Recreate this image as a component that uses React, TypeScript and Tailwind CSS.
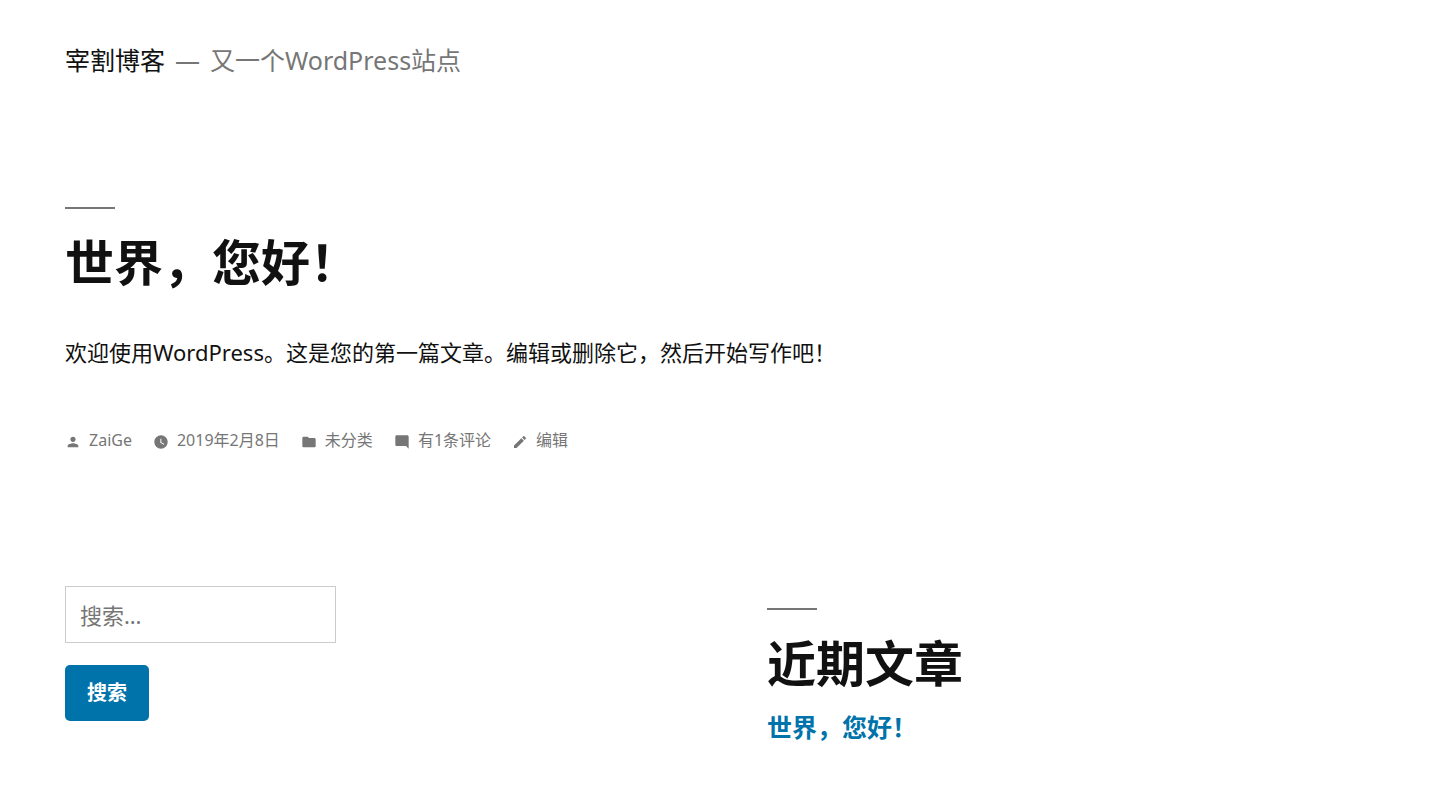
import type { ReactNode } from "react";

type MetaItem = {
  label: string;
  icon: ReactNode;
};

const META: MetaItem[] = [
  {
    label: "ZaiGe",
    icon: (
      <path d="M12 12c2.21 0 4-1.79 4-4s-1.79-4-4-4-4 1.79-4 4 1.79 4 4 4zm0 2c-2.67 0-8 1.34-8 4v2h16v-2c0-2.66-5.33-4-8-4z" />
    ),
  },
  {
    label: "2019年2月8日",
    icon: (
      <path d="M12 2C6.5 2 2 6.5 2 12s4.5 10 10 10 10-4.5 10-10S17.5 2 12 2zm4.2 14.2L11 13V7h1.5v5.2l4.5 2.7-.8 1.3z" />
    ),
  },
  {
    label: "未分类",
    icon: (
      <path d="M10 4H4c-1.1 0-2 .9-2 2v12c0 1.1.9 2 2 2h16c1.1 0 2-.9 2-2V8c0-1.1-.9-2-2-2h-8l-2-2z" />
    ),
  },
  {
    label: "有1条评论",
    icon: (
      <path d="M21.99 4c0-1.1-.89-2-1.99-2H4c-1.1 0-2 .9-2 2v12c0 1.1.9 2 2 2h14l4 4-.01-18z" />
    ),
  },
  {
    label: "编辑",
    icon: (
      <path d="M3 17.25V21h3.75L17.81 9.94l-3.75-3.75L3 17.25zM20.71 7.04c.39-.39.39-1.02 0-1.41l-2.34-2.34c-.39-.39-1.02-.39-1.41 0l-1.83 1.83 3.75 3.75 1.83-1.83z" />
    ),
  },
];

function Heading({ children }: { children: ReactNode }) {
  return (
    <h2 className="text-[49px] leading-[60px] font-bold before:mb-[23px] before:block before:h-0.5 before:w-[50px] before:bg-[#767676] before:content-['']">
      {children}
    </h2>
  );
}

function SiteHeader() {
  return (
    <header className="flex items-center text-[25px] leading-9">
      <h1>
        <a href="#">宰割博客</a>
      </h1>
      <p className="text-[#767676]">
        <span className="mx-2.5">—</span>
        又一个WordPress站点
      </p>
    </header>
  );
}

function Post() {
  return (
    <article className="mt-[129px]">
      <Heading>
        <a href="#">世界，您好！</a>
      </Heading>
      <p className="mt-10 text-[22px] leading-10">
        欢迎使用WordPress。这是您的第一篇文章。编辑或删除它，然后开始写作吧！
      </p>
      <footer className="mt-14 flex flex-wrap gap-x-[21px] text-base leading-6 text-[#767676]">
        {META.map((item) => (
          <a key={item.label} href="#" className="flex items-center gap-2">
            <svg viewBox="0 0 24 24" className="mt-1 size-4 fill-current" aria-hidden="true">
              {item.icon}
            </svg>
            {item.label}
          </a>
        ))}
      </footer>
    </article>
  );
}

function SearchForm() {
  return (
    <form className="flex flex-col items-start gap-[22px]" onSubmit={(e) => e.preventDefault()}>
      <input
        type="search"
        aria-label="搜索"
        placeholder="搜索…"
        className="h-[57px] w-[271px] border border-[#ccc] px-3.5 text-[22px] placeholder:text-[#767676]"
      />
      <button
        type="submit"
        className="h-14 rounded-[5px] bg-[#0073aa] px-[22px] text-xl font-bold text-white"
      >
        搜索
      </button>
    </form>
  );
}

export default function App() {
  return (
    <div
      lang="zh-CN"
      className="bg-white px-[65px] pt-[42px] pb-8 font-['Noto_Sans','Noto_Sans_CJK_SC',sans-serif] text-[#111]"
    >
      <SiteHeader />
      <main>
        <Post />
      </main>
      <aside className="mt-[134px] grid grid-cols-2 gap-x-[102px]">
        <SearchForm />
        <section className="mt-[22px]">
          <Heading>近期文章</Heading>
          <ul className="mt-3.5">
            <li>
              <a href="#" className="text-[25px] leading-10 font-bold text-[#0073aa]">
                世界，您好！
              </a>
            </li>
          </ul>
        </section>
      </aside>
    </div>
  );
}
